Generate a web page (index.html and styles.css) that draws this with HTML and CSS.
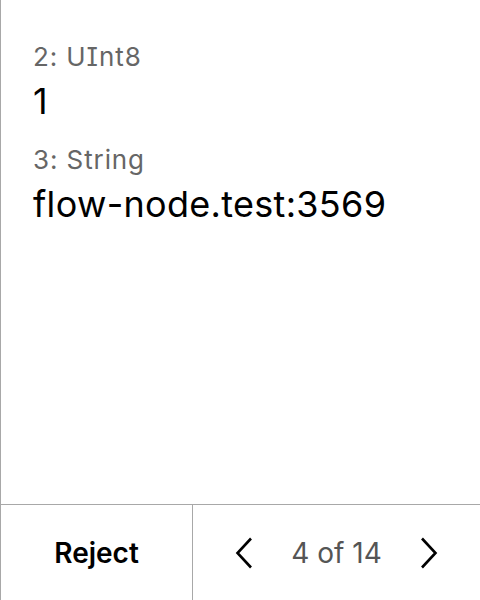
FILE: index.html
```html
<!DOCTYPE html>
<html>
<head>
<meta charset="utf-8">
<link rel="stylesheet" href="styles.css">
</head>
<body>
<div class="screen">
  <div class="content">
    <div class="field">
      <div class="label">2: UInt8</div>
      <div class="value">1</div>
    </div>
    <div class="field">
      <div class="label">3: String</div>
      <div class="value">flow-node.test:3569</div>
    </div>
  </div>
  <div class="footer">
    <div class="reject">Reject</div>
    <div class="pager">
      <svg class="chev" width="19" height="32" viewBox="0 0 19 32"><path d="M17 1.5 L3.5 16 L17 30.5" fill="none" stroke="#000" stroke-width="2.6"/></svg>
      <span class="count">4 of 14</span>
      <svg class="chev" width="19" height="32" viewBox="0 0 19 32"><path d="M2 1.5 L15.5 16 L2 30.5" fill="none" stroke="#000" stroke-width="2.6"/></svg>
    </div>
  </div>
</div>
</body>
</html>
```
FILE: styles.css
```css
html, body {
  margin: 0;
  padding: 0;
  background: #fff;
}
body {
  font-family: Inter, "Noto Sans", sans-serif;
  color: #000;
}
.screen {
  width: 480px;
  height: 600px;
  box-sizing: border-box;
  border-left: 1px solid #a8a8a8;
  display: flex;
  flex-direction: column;
}
.content {
  flex: 1;
  padding: 41px 0 0 32px;
  display: flex;
  flex-direction: column;
  gap: 21px;
}
.label {
  font-size: 26px;
  line-height: 32px;
  letter-spacing: 0.9px;
  color: #666;
  font-feature-settings: "cv08" 1;
}
.value {
  font-size: 36px;
  line-height: 44px;
  letter-spacing: 0.3px;
  margin-top: 6px;
}
.footer {
  height: 95px;
  border-top: 1px solid #a8a8a8;
  display: flex;
  margin-left: -1px;
}
.reject {
  width: 191px;
  border-left: 1px solid #a8a8a8;
  border-right: 1px solid #a8a8a8;
  display: flex;
  align-items: center;
  justify-content: center;
  font-size: 28px;
  font-weight: 600;
}
.pager {
  flex: 1;
  display: flex;
  align-items: center;
  justify-content: center;
  gap: 38px;
}
.count {
  font-size: 28px;
  color: #555;
}
.chev {
  display: block;
}
```
